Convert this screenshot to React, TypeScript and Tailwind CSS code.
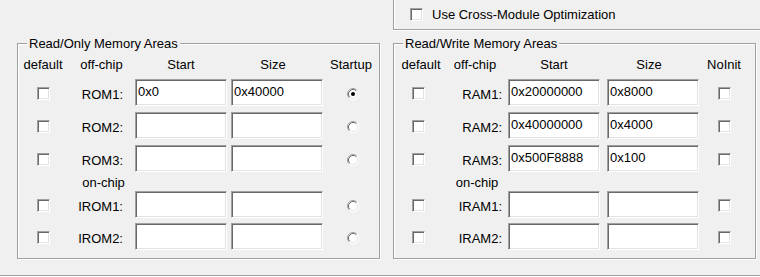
import React from 'react'

type Row = {
  label: string
  start?: string
  size?: string
  on?: boolean
}

type GroupProps = {
  title: string
  width: string
  lastHeader: string
  kind: 'radio' | 'check'
  rows: Row[]
  chipRows: Row[]
  // column classes
  colA: string
  colB: string
  gap: string
  colE: string
  headA: string
  labelPad: string
}

const sunken =
  'bg-white border border-t-[#a0a0a0] border-l-[#a0a0a0] border-b-white border-r-white shadow-[inset_1px_1px_0_#696969,inset_-1px_-1px_0_#e3e3e3]'

const Check = () => <span className={`block w-[13px] h-[13px] ${sunken}`} />

const Radio = ({ on }: { on?: boolean }) => (
  <svg width="12" height="12" viewBox="0 0 12 12" className="block">
    <circle cx="6" cy="6" r="5.5" fill="#fff" />
    <path d="M2.11 9.89 A5.5 5.5 0 0 1 9.89 2.11" fill="none" stroke="#a0a0a0" strokeWidth="1" />
    <path d="M2.82 9.18 A4.5 4.5 0 0 1 9.18 2.82" fill="none" stroke="#696969" strokeWidth="1" />
    <path d="M9.89 2.11 A5.5 5.5 0 0 1 2.11 9.89" fill="none" stroke="#fff" strokeWidth="1" />
    <path d="M9.18 2.82 A4.5 4.5 0 0 1 2.82 9.18" fill="none" stroke="#e3e3e3" strokeWidth="1" />
    {on && <circle cx="6" cy="6" r="2" fill="#000" />}
  </svg>
)

const Field = ({ value }: { value?: string }) => (
  <input
    readOnly
    value={value ?? ''}
    className={`w-[92px] h-[27px] ${sunken} pl-[2px] pr-0 pt-[4px] pb-[6px] text-[13px] leading-[15px] text-black outline-none font-['Liberation_Sans',Arial,sans-serif]`}
  />
)

const Group = (p: GroupProps) => {
  const renderRow = (r: Row, mt: string) => (
    <div key={r.label} className={`flex items-center h-[27px] ${mt}`}>
      <div className={`${p.colA} flex justify-center mt-[1px]`}>
        <Check />
      </div>
      <div className={`${p.colB} text-right ${p.labelPad} pt-[4px]`}>{r.label}</div>
      <Field value={r.start} />
      <div className={p.gap} />
      <Field value={r.size} />
      <div className={`${p.colE} flex justify-center`}>
        {p.kind === 'radio' ? (
          <div className="pl-[3px] mt-[2px]">
            <Radio on={r.on} />
          </div>
        ) : (
          <div className="mt-[1px]">
            <Check />
          </div>
        )}
      </div>
    </div>
  )

  return (
    <div className={`relative ${p.width} h-[216px] border border-[#a0a0a0] shadow-[1px_1px_0_#fff,inset_1px_1px_0_#fff] pt-[13px]`}>
      <span className="absolute left-[9px] -top-[8px] px-[2px] bg-[#f0f0f0]">{p.title}</span>
      <div className="flex h-[15px]">
        <div className={`${p.colA} text-center ${p.headA}`}>default</div>
        <div className={`${p.colB} text-center`}>off-chip</div>
        <div className="w-[92px] text-center">Start</div>
        <div className={p.gap} />
        <div className="w-[92px] text-center pr-[8px]">Size</div>
        <div className={`${p.colE} text-center`}>{p.lastHeader}</div>
      </div>
      {renderRow(p.rows[0], 'mt-[7px]')}
      {renderRow(p.rows[1], 'mt-[6px]')}
      {renderRow(p.rows[2], 'mt-[6px]')}
      <div className="flex mt-[3px] h-[15px]">
        <div className={p.colA} />
        <div className={`${p.colB} text-center pl-[4px]`}>on-chip</div>
      </div>
      {renderRow(p.chipRows[0], 'mt-[1px]')}
      {renderRow(p.chipRows[1], 'mt-[5px]')}
    </div>
  )
}

export default function App() {
  return (
    <div className="w-[760px] h-[277px] bg-[#f0f0f0] overflow-hidden font-['Liberation_Sans',Arial,sans-serif] text-[13px] leading-[15px] text-black">
      <div className="flex h-[30px]">
        <div className="w-[393px]" />
        <div className="flex-1 flex items-center pl-[16px] gap-[9px] border-l border-b border-[#a0a0a0] shadow-[inset_1px_0_0_#fff,0_1px_0_#fff]">
          <Check />
          <span>Use Cross-Module Optimization</span>
        </div>
      </div>

      <div className="flex mt-[13px] pl-[17px] gap-[13px]">
        <Group
          title="Read/Only Memory Areas"
          width="w-[363px]"
          lastHeader="Startup"
          kind="radio"
          colA="w-[50px]"
          colB="w-[67px]"
          gap="w-[4px]"
          colE="w-[56px]"
          headA=""
          labelPad="pr-[12px]"
          rows={[
            { label: 'ROM1:', start: '0x0', size: '0x40000', on: true },
            { label: 'ROM2:' },
            { label: 'ROM3:' },
          ]}
          chipRows={[{ label: 'IROM1:' }, { label: 'IROM2:' }]}
        />
        <Group
          title="Read/Write Memory Areas"
          width="w-[363px]"
          lastHeader="NoInit"
          kind="check"
          colA="w-[48px]"
          colB="w-[66px]"
          gap="w-[7px]"
          colE="w-[50px]"
          headA="pl-[6px]"
          labelPad="pr-[6px]"
          rows={[
            { label: 'RAM1:', start: '0x20000000', size: '0x8000' },
            { label: 'RAM2:', start: '0x40000000', size: '0x4000' },
            { label: 'RAM3:', start: '0x500F8888', size: '0x100' },
          ]}
          chipRows={[{ label: 'IRAM1:' }, { label: 'IRAM2:' }]}
        />
      </div>

      <div className="mt-[16px] border-t border-[#a0a0a0] shadow-[0_1px_0_#fff]" />
    </div>
  )
}
